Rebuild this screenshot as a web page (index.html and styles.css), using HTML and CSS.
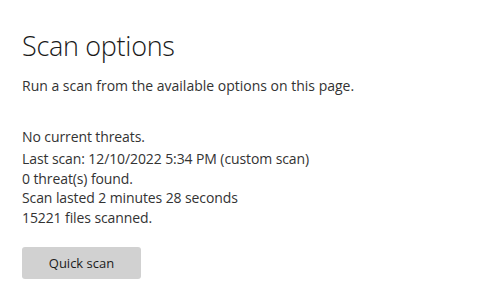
FILE: index.html
```html
<!DOCTYPE html>
<html lang="en">
<head>
    <meta charset="UTF-8">
    <title>Scan options</title>
    <link rel="stylesheet" href="styles.css">
</head>
<body>

<div class="scan-page">
    <!-- Header -->
    <h1 class="page-title">Scan options</h1>
    <p class="page-desc">Run a scan from the available options on this page.</p>

    <!-- Last scan status -->
    <div class="scan-status">
        <p class="status-head">No current threats.</p>
        <p>Last scan: 12/10/2022 5:34 PM (custom scan)</p>
        <p>0 threat(s) found.</p>
        <p>Scan lasted 2 minutes 28 seconds</p>
        <p>15221 files scanned.</p>
    </div>

    <button class="scan-button">Quick scan</button>
</div>

</body>
</html>
```

FILE: styles.css
```css
/* Global Styling */
* {
    margin: 0;
    padding: 0;
    box-sizing: border-box;
}

body {
    background-color: #ffffff;
    color: #1b1b1b;
    font-family: "Open Sans", "Noto Sans", sans-serif;
}

.scan-page {
    display: flex;
    flex-direction: column;
    align-items: flex-start;
    padding: 28px 22px 0 22px;
}

/* Header */
.page-title {
    font-size: 27px;
    font-weight: 300;
    line-height: 36px;
    color: #1a1a1a;
    letter-spacing: -0.3px;
}

.page-desc {
    margin-top: 12px;
    font-size: 14px;
    line-height: 20px;
    color: #333;
}

/* Status block */
.scan-status {
    margin-top: 31px;
    font-size: 14px;
    line-height: 19.75px;
    color: #333;
    letter-spacing: -0.1px;
}

.scan-status .status-head {
    margin-bottom: 2px;
}

/* Button */
.scan-button {
    margin-top: 19px;
    width: 119px;
    height: 32px;
    border: none;
    border-radius: 3px;
    background-color: #d1d1d1;
    color: #1b1b1b;
    font-family: inherit;
    font-size: 13px;
}
```
